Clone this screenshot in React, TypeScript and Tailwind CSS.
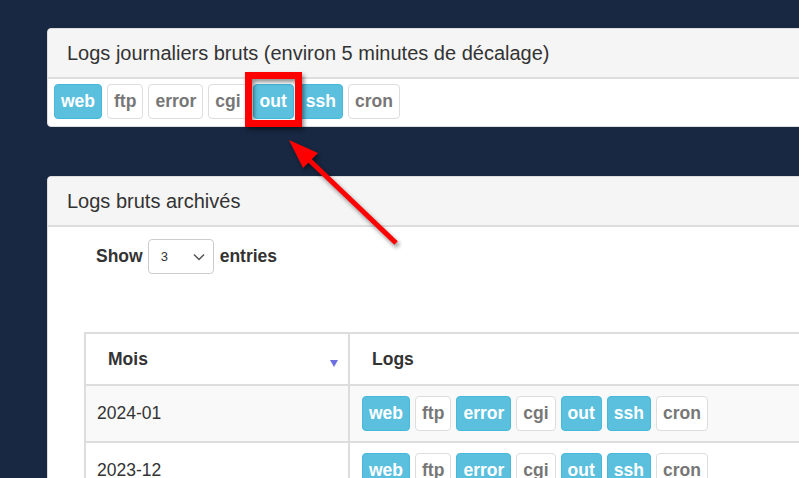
const LOGS = ["web", "ftp", "error", "cgi", "out", "ssh", "cron"];

function LogButtons({ active }: { active: string[] }) {
  return (
    <div className="flex gap-[5px]">
      {LOGS.map((name) => (
        <span
          key={name}
          className={
            active.includes(name)
              ? "h-[35px] px-[6px] flex items-center rounded-[4px] border border-[#46b8da] bg-[#5bc0de] text-white text-[17.5px] font-bold"
              : "h-[35px] px-[6px] flex items-center rounded-[4px] border border-[#ddd] bg-white text-[#777] text-[17.5px] font-bold"
          }
        >
          {name}
        </span>
      ))}
    </div>
  );
}

function PanelHeader({ title }: { title: string }) {
  return (
    <div className="bg-[#f5f5f5] border-b-2 border-[#ddd] px-[19px] py-[12px] text-[20px] leading-[24px] text-[#333] rounded-t-[4px]">
      {title}
    </div>
  );
}

export default function App() {
  const months = [
    { month: "2024-01", active: ["web", "error", "out", "ssh"] },
    { month: "2023-12", active: ["web", "error", "out", "ssh"] },
  ];

  return (
    <div
      className="relative h-[478px] w-[799px] overflow-hidden bg-[#182842] pl-[47px] pt-[28px]"
      style={{ fontFamily: '"Liberation Sans", Arial, sans-serif' }}
    >
      <div className="w-[790px] bg-white border border-[#ddd] rounded-[4px]">
        <PanelHeader title="Logs journaliers bruts (environ 5 minutes de décalage)" />
        <div className="pl-[6px] pt-[5px] pb-[7px]">
          <LogButtons active={["web", "out", "ssh"]} />
        </div>
      </div>

      <div className="mt-[49px] w-[790px] h-[320px] bg-white border border-[#ddd] rounded-[4px]">
        <PanelHeader title="Logs bruts archivés" />
        <div className="pl-[36px] pt-[12px]">
          <div className="flex items-center pl-[12px] text-[17.5px] font-bold text-[#333]">
            <span>Show</span>
            <div className="ml-[5px] mr-[6px] flex h-[35px] w-[66px] items-center justify-between rounded-[4px] border border-[#ccc] bg-white pl-[12px] pr-[8px] text-[13px] font-normal text-[#333]">
              <span>3</span>
              <svg width="12" height="8" viewBox="0 0 12 8" fill="none">
                <path d="M1 1.5l5 5 5-5" stroke="#555" strokeWidth="1.5" />
              </svg>
            </div>
            <span>entries</span>
          </div>

          <table className="mt-[58px] w-[760px] border-collapse border-2 border-[#ddd] text-[17.5px] text-[#333]">
            <thead>
              <tr>
                <th className="relative w-[264px] h-[52px] border-2 border-[#ddd] pl-[22px] text-left font-bold">
                  Mois
                  <span className="absolute right-[10px] top-[26px] h-0 w-0 border-x-[4px] border-t-[7px] border-x-transparent border-t-[#6f6fe0]" />
                </th>
                <th className="h-[52px] border-2 border-[#ddd] pl-[22px] text-left font-bold">Logs</th>
              </tr>
            </thead>
            <tbody>
              {months.map((row, i) => (
                <tr key={row.month} className={i % 2 === 0 ? "bg-[#f9f9f9]" : "bg-white"}>
                  <td className="border-2 border-[#ddd] px-[11px]">{row.month}</td>
                  <td className="border-2 border-[#ddd] px-[12px] py-[10px]">
                    <LogButtons active={row.active} />
                  </td>
                </tr>
              ))}
            </tbody>
          </table>
        </div>
      </div>

      {/* annotation */}
      <div className="absolute left-[245px] top-[72px] h-[55px] w-[57px] border-[7px] border-[#ff0000] drop-shadow-[2px_3px_2px_rgba(0,0,0,0.45)]" />
      <svg
        className="absolute left-0 top-0 drop-shadow-[2px_3px_2px_rgba(0,0,0,0.45)]"
        width="799"
        height="478"
        viewBox="0 0 799 478"
      >
        <line x1="396" y1="243" x2="306" y2="157" stroke="#ff0000" strokeWidth="5" />
        <polygon points="289,140 303,168 318,153" fill="#ff0000" />
      </svg>
    </div>
  );
}
